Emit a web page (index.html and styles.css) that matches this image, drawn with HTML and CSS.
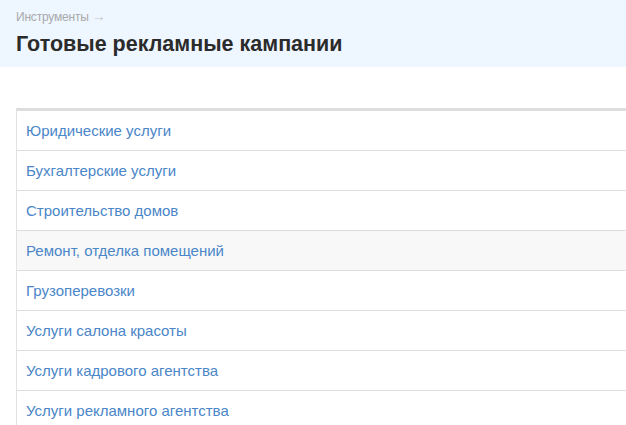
FILE: index.html
```html
<!DOCTYPE html>
<html lang="ru">
<head>
<meta charset="utf-8">
<link rel="stylesheet" href="styles.css">
</head>
<body>
<header class="page-head">
  <div class="crumbs">Инструменты <span class="arrow">→</span></div>
  <h1 class="title">Готовые рекламные кампании</h1>
</header>
<main class="content">
  <ul class="campaigns">
    <li><a href="#">Юридические услуги</a></li>
    <li><a href="#">Бухгалтерские услуги</a></li>
    <li><a href="#">Строительство домов</a></li>
    <li class="hover"><a href="#">Ремонт, отделка помещений</a></li>
    <li><a href="#">Грузоперевозки</a></li>
    <li><a href="#">Услуги салона красоты</a></li>
    <li><a href="#">Услуги кадрового агентства</a></li>
    <li><a href="#">Услуги рекламного агентства</a></li>
  </ul>
</main>
</body>
</html>
```
FILE: styles.css
```css
html, body {
  margin: 0;
  padding: 0;
  overflow: hidden;
}
body {
  font-family: "Liberation Sans", Arial, sans-serif;
  background: #fff;
  height: 425px;
}
.page-head {
  background: #eef6ff;
  height: 67px;
  padding: 10px 16px 0;
  box-sizing: border-box;
}
.crumbs {
  font-size: 12px;
  color: #a9a9a9;
  line-height: 15px;
  letter-spacing: -0.2px;
}
.arrow {
  color: #c8c8c8;
  font-size: 14px;
  line-height: 12px;
}
.title {
  margin: 5px 0 0;
  font-size: 21.5px;
  font-weight: bold;
  color: #2b2b2b;
  line-height: 28px;
}
.content {
  padding: 41px 0 0 16px;
}
.campaigns {
  list-style: none;
  margin: 0;
  padding: 0;
  border-top: 3px solid #dddddd;
  border-left: 1px solid #e2e2e2;
}
.campaigns li {
  height: 39px;
  border-bottom: 1px solid #dedede;
  display: flex;
  align-items: center;
  padding-left: 9px;
}
.campaigns li.hover {
  background: #f8f8f8;
}
.campaigns a {
  color: #4a86c8;
  text-decoration: none;
  font-size: 15px;
}
```
